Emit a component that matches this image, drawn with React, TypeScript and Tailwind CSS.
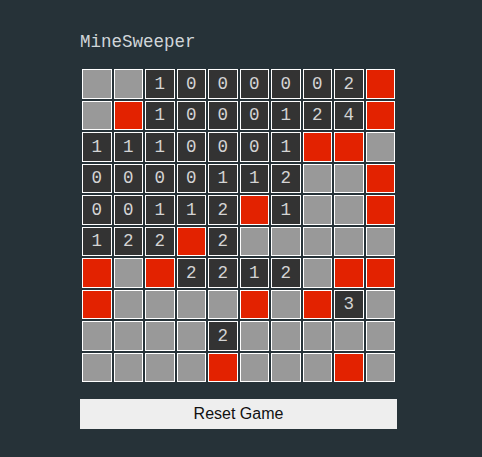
const board: string[][] = [
  ["G", "G", "1", "0", "0", "0", "0", "0", "2", "R"],
  ["G", "R", "1", "0", "0", "0", "1", "2", "4", "R"],
  ["1", "1", "1", "0", "0", "0", "1", "R", "R", "G"],
  ["0", "0", "0", "0", "1", "1", "2", "G", "G", "R"],
  ["0", "0", "1", "1", "2", "R", "1", "G", "G", "R"],
  ["1", "2", "2", "R", "2", "G", "G", "G", "G", "G"],
  ["R", "G", "R", "2", "2", "1", "2", "G", "R", "R"],
  ["R", "G", "G", "G", "G", "R", "G", "R", "3", "G"],
  ["G", "G", "G", "G", "2", "G", "G", "G", "G", "G"],
  ["G", "G", "G", "G", "R", "G", "G", "G", "R", "G"],
];

function Cell({ value }: { value: string }) {
  if (value === "G") return <div className="h-[29.5px] border border-white bg-[#999999]" />;
  if (value === "R") return <div className="h-[29.5px] border border-white bg-[#e32200]" />;
  return (
    <div className="flex h-[29.5px] items-center justify-center border border-white bg-[#333333] text-[17.5px] text-[#d4d4d4]">
      {value}
    </div>
  );
}

export default function App() {
  return (
    <div className="min-h-[457px] w-[482px] bg-[#263238] pl-[80px] pt-[30px] font-['Liberation_Mono',monospace]">
      <h1 className="h-[24px] text-[17.5px] leading-[24px] text-[#d0d6d9]">MineSweeper</h1>
      <div className="mt-[15px] grid w-[317px] grid-cols-[repeat(10,29.5px)] gap-[2px] pl-[2px]">
        {board.map((row, r) => row.map((v, c) => <Cell key={r + "-" + c} value={v} />))}
      </div>
      <button className="mt-[17px] h-[30px] w-[317px] bg-[#eeeeee] font-['Liberation_Sans',Arial,sans-serif] text-[16px] text-[#111111]">
        Reset Game
      </button>
    </div>
  );
}
